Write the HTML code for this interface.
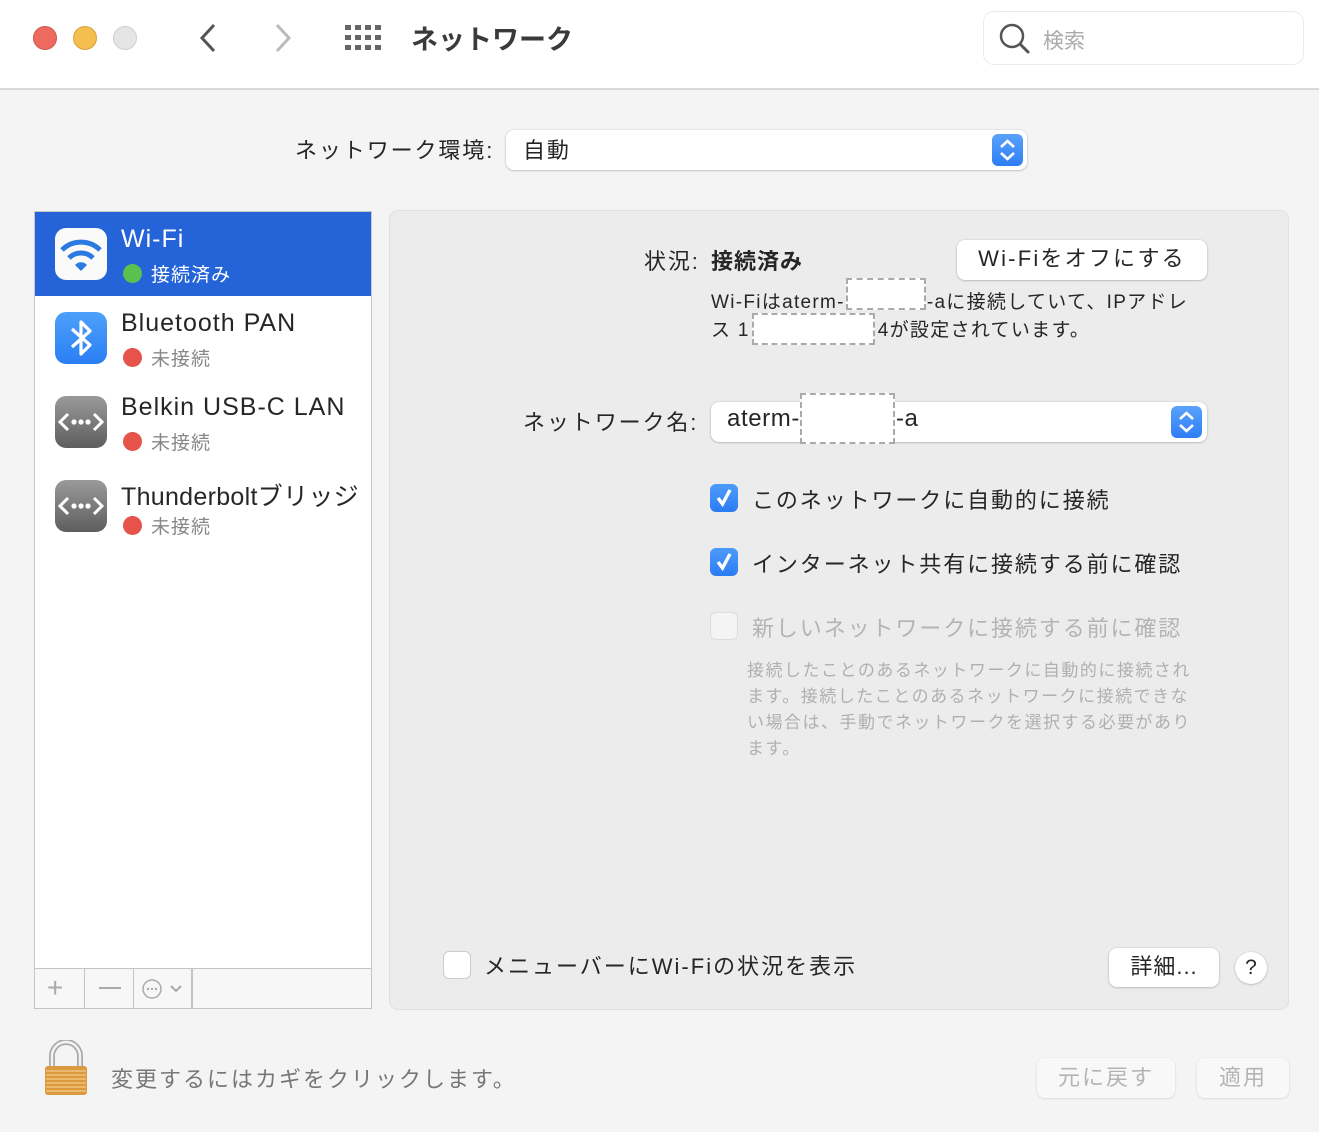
<!DOCTYPE html>
<html><head><meta charset="utf-8">
<style>
*{margin:0;padding:0;box-sizing:border-box}
body{width:1319px;height:1132px;background:#f4f4f4;font-family:"Liberation Sans","Noto Sans CJK JP",sans-serif;color:#262626;position:relative;overflow:hidden}
.a{position:absolute;white-space:nowrap}
.ls{letter-spacing:1.9px}
.tb{position:absolute;left:0;top:0;width:1319px;height:90px;background:#fff;border-bottom:2px solid #d9d9d9}
.dot{position:absolute;width:24px;height:24px;border-radius:50%;top:26px}
.btn{position:absolute;background:#fff;border-radius:8px;box-shadow:0 0.5px 2px rgba(0,0,0,.3);text-align:center}
.stp{position:absolute;background:linear-gradient(#5aa2fb,#2e7df6);border-radius:6px}
.cb{position:absolute;width:28px;height:28px;border-radius:6px}
.red{display:inline-block;width:19px;height:19px;border-radius:50%;background:#e5534b;vertical-align:-2px;margin-right:9px}
.ri{display:inline-block;background:#fff;border:2px dashed #aaa;vertical-align:middle;position:relative}
.ico{position:absolute;left:55px;width:52px;height:52px;border-radius:11px}
.nm{font-size:25px;letter-spacing:1px}
</style></head><body>
<div class="tb"></div>
<div class="dot" style="left:33px;background:#ec6a5e;border:1px solid #d5554a"></div>
<div class="dot" style="left:73px;background:#f4bf4f;border:1px solid #d8a23c"></div>
<div class="dot" style="left:113px;background:#e5e5e5;border:1px solid #cfcfcf"></div>
<svg class="a" style="left:196px;top:22px" width="24" height="32"><path d="M18 3 L6 16 L18 29" stroke="#555" stroke-width="3" fill="none"/></svg>
<svg class="a" style="left:271px;top:22px" width="24" height="32"><path d="M6 3 L18 16 L6 29" stroke="#bbb" stroke-width="3" fill="none"/></svg>
<svg class="a" style="left:345px;top:25px" width="38" height="26" fill="#666">
<rect x="0" y="0" width="6" height="5"/><rect x="10" y="0" width="6" height="5"/><rect x="20" y="0" width="6" height="5"/><rect x="30" y="0" width="6" height="5"/>
<rect x="0" y="10" width="6" height="5"/><rect x="10" y="10" width="6" height="5"/><rect x="20" y="10" width="6" height="5"/><rect x="30" y="10" width="6" height="5"/>
<rect x="0" y="20" width="6" height="5"/><rect x="10" y="20" width="6" height="5"/><rect x="20" y="20" width="6" height="5"/><rect x="30" y="20" width="6" height="5"/></svg>
<div class="a" style="left:411px;top:18px;font-size:27px;font-weight:bold;color:#3a3a3a">ネットワーク</div>
<div class="a" style="left:983px;top:11px;width:321px;height:54px;border:1.5px solid #ebebeb;border-radius:11px;background:#fff"></div>
<svg class="a" style="left:998px;top:22px" width="34" height="34"><circle cx="14" cy="14" r="11" stroke="#555" stroke-width="2.5" fill="none"/><path d="M22 22 L30 30" stroke="#555" stroke-width="3" stroke-linecap="round"/></svg>
<div class="a" style="left:1043px;top:25px;font-size:21px;color:#aaa">検索</div>

<div class="a ls" style="left:295px;top:133px;font-size:22px">ネットワーク環境:</div>
<div class="btn" style="left:506px;top:130px;width:521px;height:40px"></div>
<div class="a ls" style="left:523px;top:133px;font-size:22px">自動</div>
<div class="stp" style="left:992px;top:134px;width:31px;height:32px"><svg width="31" height="32"><path d="M9 13 L15.5 7 L22 13 M9 19 L15.5 25 L22 19" stroke="#fff" stroke-width="2.6" fill="none"/></svg></div>

<div class="a" style="left:34px;top:211px;width:338px;height:798px;background:#fff;border:1.5px solid #c8c8c8"></div>
<div class="a" style="left:35px;top:212px;width:336px;height:84px;background:#2464d8"></div>
<div class="ico" style="top:228px;background:#fafafa"><svg width="52" height="52"><path d="M7 22 A27 27 0 0 1 45 22" stroke="#2a7ae2" stroke-width="5" fill="none"/><path d="M14 30 A17 17 0 0 1 38 30" stroke="#2a7ae2" stroke-width="5" fill="none"/><path d="M20 37 A8 8 0 0 1 32 37 L26 43 Z" fill="#2a7ae2"/></svg></div>
<div class="a nm" style="left:121px;top:225px;color:#fff">Wi-Fi</div>
<div class="a" style="left:123px;top:260px;font-size:19px;color:#fff;letter-spacing:1px"><span class="red" style="background:#5bc14e"></span>接続済み</div>
<div class="ico" style="top:312px;background:linear-gradient(#4da1fb,#2a7ef4)"><svg width="52" height="52"><path d="M17 17 L35 33 L26 42 L26 10 L35 19 L17 35" stroke="#fff" stroke-width="3.2" fill="none" stroke-linejoin="round"/></svg></div>
<div class="a nm" style="left:121px;top:309px">Bluetooth PAN</div>
<div class="a" style="left:123px;top:344px;font-size:19px;color:#888;letter-spacing:1px"><span class="red"></span>未接続</div>
<div class="ico" style="top:396px;background:linear-gradient(#9a9a9a,#5e5e5e)"><svg width="52" height="52"><path d="M13 18 L5 26 L13 34 M39 18 L47 26 L39 34" stroke="#fff" stroke-width="3" fill="none"/><circle cx="19" cy="26" r="2.6" fill="#fff"/><circle cx="26" cy="26" r="2.6" fill="#fff"/><circle cx="33" cy="26" r="2.6" fill="#fff"/></svg></div>
<div class="a nm" style="left:121px;top:393px">Belkin USB-C LAN</div>
<div class="a" style="left:123px;top:428px;font-size:19px;color:#888;letter-spacing:1px"><span class="red"></span>未接続</div>
<div class="ico" style="top:480px;background:linear-gradient(#9a9a9a,#5e5e5e)"><svg width="52" height="52"><path d="M13 18 L5 26 L13 34 M39 18 L47 26 L39 34" stroke="#fff" stroke-width="3" fill="none"/><circle cx="19" cy="26" r="2.6" fill="#fff"/><circle cx="26" cy="26" r="2.6" fill="#fff"/><circle cx="33" cy="26" r="2.6" fill="#fff"/></svg></div>
<div class="a" style="left:121px;top:477px;font-size:25px;letter-spacing:0.3px">Thunderboltブリッジ</div>
<div class="a" style="left:123px;top:512px;font-size:19px;color:#888;letter-spacing:1px"><span class="red"></span>未接続</div>
<div class="a" style="left:34px;top:968px;width:338px;height:41px;border:1.5px solid #c4c4c4;background:#f7f7f7"></div>
<div class="a" style="left:84px;top:969px;width:1px;height:40px;background:#c4c4c4"></div>
<div class="a" style="left:133px;top:969px;width:1px;height:40px;background:#c4c4c4"></div>
<div class="a" style="left:191px;top:969px;width:2px;height:40px;background:#c4c4c4"></div>
<div class="a" style="left:47px;top:972px;font-size:28px;color:#aaa;font-weight:300">+</div>
<div class="a" style="left:99px;top:987px;width:22px;height:2px;background:#aaa"></div>
<svg class="a" style="left:141px;top:978px" width="48" height="22"><circle cx="11" cy="11" r="9" stroke="#aaa" stroke-width="1.5" fill="none"/><circle cx="7" cy="11" r="1.2" fill="#aaa"/><circle cx="11" cy="11" r="1.2" fill="#aaa"/><circle cx="15" cy="11" r="1.2" fill="#aaa"/><path d="M30 8 L35 13 L40 8" stroke="#aaa" stroke-width="2" fill="none"/></svg>

<div class="a" style="left:389px;top:210px;width:900px;height:800px;background:#ececec;border:1px solid #e0e0e0;border-radius:9px"></div>
<div class="a ls" style="left:644px;top:244px;font-size:22px">状況:</div>
<div class="a" style="left:711px;top:244px;font-size:22px;font-weight:bold;letter-spacing:1px">接続済み</div>
<div class="btn" style="left:957px;top:240px;width:250px;height:40px;font-size:22px;line-height:38px;letter-spacing:2.2px">Wi-Fiをオフにする</div>
<div class="a" style="left:711px;top:289px;font-size:19px;line-height:28px;letter-spacing:1.3px">Wi-Fiはaterm-<span class="ri" style="width:80px;height:32px;margin:-8px 1px -4px;top:-7px"></span>-aに接続していて、IPアドレ<br>ス 1<span class="ri" style="width:123px;height:32px;margin:-4px 3px -4px 2px;top:-2px"></span>4が設定されています。</div>
<div class="a ls" style="left:523px;top:405px;font-size:22px">ネットワーク名:</div>
<div class="btn" style="left:711px;top:402px;width:496px;height:40px"></div>
<div class="a" style="left:727px;top:405px;font-size:24px;letter-spacing:0.6px">aterm-<span class="ri" style="width:95px;height:51px;margin:-16px 1px -10px 0;top:2px"></span>-a</div>
<div class="stp" style="left:1171px;top:406px;width:31px;height:32px"><svg width="31" height="32"><path d="M9 13 L15.5 7 L22 13 M9 19 L15.5 25 L22 19" stroke="#fff" stroke-width="2.6" fill="none"/></svg></div>

<div class="cb" style="left:710px;top:484px;background:linear-gradient(#4f9bfa,#2b7cf4)"><svg width="28" height="28"><path d="M8 14 L12.5 20 L20 6" stroke="#fff" stroke-width="3.4" fill="none"/></svg></div>
<div class="a ls" style="left:752px;top:483px;font-size:22px">このネットワークに自動的に接続</div>
<div class="cb" style="left:710px;top:548px;background:linear-gradient(#4f9bfa,#2b7cf4)"><svg width="28" height="28"><path d="M8 14 L12.5 20 L20 6" stroke="#fff" stroke-width="3.4" fill="none"/></svg></div>
<div class="a ls" style="left:752px;top:547px;font-size:22px">インターネット共有に接続する前に確認</div>
<div class="cb" style="left:710px;top:612px;background:#f4f4f4;border:1px solid #ddd"></div>
<div class="a ls" style="left:752px;top:611px;font-size:22px;color:#b4b4b4">新しいネットワークに接続する前に確認</div>
<div class="a" style="left:747px;top:658px;font-size:17px;line-height:26px;color:#b0b0b0;letter-spacing:1.5px">接続したことのあるネットワークに自動的に接続され<br>ます。接続したことのあるネットワークに接続できな<br>い場合は、手動でネットワークを選択する必要があり<br>ます。</div>

<div class="cb" style="left:443px;top:951px;background:#fff;border:1px solid #ccc"></div>
<div class="a" style="left:484px;top:949px;font-size:22px;letter-spacing:2px">メニューバーにWi-Fiの状況を表示</div>
<div class="btn" style="left:1109px;top:948px;width:110px;height:39px;font-size:22px;line-height:38px;letter-spacing:1px">詳細...</div>
<div class="btn" style="left:1235px;top:952px;width:32px;height:32px;border-radius:50%;font-size:21px;line-height:31px">?</div>

<svg class="a" style="left:42px;top:1040px" width="48" height="58"><path d="M10 28 L10 16 A14 14 0 0 1 38 16 L38 28" stroke="#aaa" stroke-width="6" fill="none"/><path d="M10 28 L10 16 A14 14 0 0 1 38 16 L38 28" stroke="#f2f2f2" stroke-width="2.5" fill="none"/><rect x="3" y="26" width="42" height="29" rx="3" fill="#d99a40"/><g stroke="#f1c27a" stroke-width="1.6"><path d="M4 31H44M4 35H44M4 39H44M4 43H44M4 47H44M4 51H44"/></g></svg>
<div class="a" style="left:111px;top:1062px;font-size:22px;color:#777;letter-spacing:2px">変更するにはカギをクリックします。</div>
<div class="btn" style="left:1037px;top:1058px;width:138px;height:40px;font-size:22px;line-height:39px;color:#b4b4b4;background:#f8f8f8;box-shadow:0 0.5px 2px rgba(0,0,0,.15);letter-spacing:2px">元に戻す</div>
<div class="btn" style="left:1197px;top:1058px;width:92px;height:40px;font-size:22px;line-height:39px;color:#b4b4b4;background:#f8f8f8;box-shadow:0 0.5px 2px rgba(0,0,0,.15);letter-spacing:2px">適用</div>
</body></html>
